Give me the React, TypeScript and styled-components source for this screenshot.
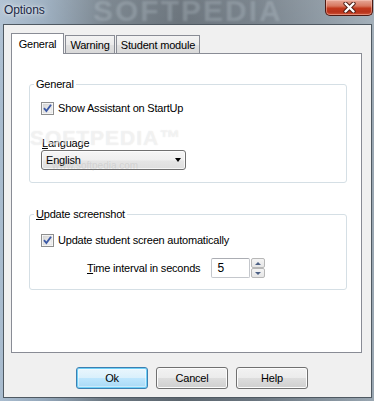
import styled, { createGlobalStyle } from 'styled-components'

const GlobalStyle = createGlobalStyle`
  html, body {
    margin: 0;
    padding: 0;
    background: #5a646d;
  }
  body {
    font-family: "Liberation Sans", Arial, sans-serif;
    font-size: 11px;
    color: #000;
  }
`

const Window = styled.div`
  position: relative;
  width: 374px;
  height: 401px;
  box-sizing: border-box;
  padding: 0 2px 3px 3px;
  display: flex;
  flex-direction: column;
  overflow: hidden;
  background:
    linear-gradient(180deg, rgba(255, 255, 255, 0.12) 0%, rgba(255, 255, 255, 0) 30%),
    linear-gradient(90deg, #a9bccf 0%, #93a7ba 12%, #6d7983 28%, #5c666f 48%, #6a757f 68%, #86939e 88%, #9aa7b2 100%);
`

const TitleBar = styled.div`
  position: relative;
  height: 24px;
  display: flex;
  align-items: flex-start;
`

const Caption = styled.span`
  position: relative;
  z-index: 1;
  margin: 3px 0 0 1px;
  font-size: 12px;
  line-height: 15px;
  letter-spacing: -0.1px;
  color: #1c2845;
  text-shadow: 0 0 6px rgba(255, 255, 255, 0.8), 0 0 3px rgba(255, 255, 255, 0.6);
`

const Watermark = styled.span`
  position: absolute;
  left: 90px;
  top: -6px;
  font-size: 30px;
  font-weight: bold;
  letter-spacing: 2px;
  color: rgba(205, 215, 225, 0.25);
  filter: blur(1.2px);
  pointer-events: none;
`

const CloseButton = styled.div`
  margin-left: auto;
  margin-right: -1px;
  width: 48px;
  height: 16px;
  box-sizing: border-box;
  border: 1px solid #4e1a12;
  border-top: none;
  border-radius: 0 0 5px 5px;
  display: flex;
  align-items: center;
  justify-content: center;
  background: linear-gradient(180deg, #e7a898 0%, #d8775f 40%, #c2391d 55%, #b8321a 80%, #d0573a 100%);
  box-shadow: inset 0 0 0 1px rgba(255, 210, 200, 0.45);
`

const Client = styled.div`
  flex: 1;
  display: flex;
  flex-direction: column;
  background: #f0f0f0;
  border: 1px solid #4f5962;
`

const TabArea = styled.div`
  padding: 8px 0 0 7px;
`

const TabStrip = styled.div`
  display: flex;
  align-items: flex-end;
  height: 21px;
`

const Tab = styled.div<{ $active?: boolean; $width: number }>`
  position: relative;
  z-index: ${(p) => (p.$active ? 2 : 1)};
  box-sizing: border-box;
  width: ${(p) => p.$width}px;
  height: ${(p) => (p.$active ? 21 : 18)}px;
  margin-bottom: ${(p) => (p.$active ? 0 : 1)}px;
  border: 1px solid #898c95;
  border-bottom: none;
  display: flex;
  align-items: center;
  justify-content: center;
  padding-top: ${(p) => (p.$active ? 0 : 1)}px;
  letter-spacing: -0.2px;
  background: ${(p) =>
    p.$active ? '#fff' : 'linear-gradient(180deg, #f3f3f3 0%, #ebebeb 50%, #e0e0e0 55%, #d9d9d9 100%)'};
  & + & {
    margin-left: 1px;
  }
`

const Panel = styled.div`
  box-sizing: border-box;
  width: 351px;
  height: 300px;
  margin-top: -1px;
  border: 1px solid #898c95;
  background: #fff;
  padding: 30px 0 0 17px;
`

const Group = styled.div<{ $height: number; $gap?: number }>`
  position: relative;
  box-sizing: border-box;
  width: 318px;
  height: ${(p) => p.$height}px;
  margin-top: ${(p) => p.$gap ?? 0}px;
  border: 1px solid #d5dfe5;
  border-radius: 3px;
  padding: ${(p) => (p.$gap ? 19 : 17)}px 0 0 11px;
`

const Legend = styled.span`
  position: absolute;
  top: -7px;
  left: 4px;
  padding: 0 2px;
  line-height: 13px;
  letter-spacing: -0.2px;
  background: #fff;
`

const CheckRow = styled.label`
  display: flex;
  align-items: center;
  gap: 4px;
  height: 13px;
  line-height: 13px;
  letter-spacing: -0.2px;
`

const Box = styled.svg`
  flex: none;
  display: block;
`

const FieldLabel = styled.div`
  margin: 22px 0 0 1px;
  line-height: 13px;
  letter-spacing: -0.2px;
`

const U = styled.span`
  text-decoration: underline;
  text-underline-offset: 1px;
`

const Select = styled.div`
  box-sizing: border-box;
  width: 145px;
  height: 20px;
  border: 1px solid #707070;
  border-radius: 3px;
  display: flex;
  align-items: center;
  padding: 0 4px 0 4px;
  letter-spacing: -0.2px;
  background: linear-gradient(180deg, #f6f6f6 0%, #efefef 50%, #e5e5e5 55%, #dedede 100%);
  box-shadow: inset 0 0 0 1px rgba(255, 255, 255, 0.7);
`

const Arrow = styled.span`
  margin-left: auto;
  width: 0;
  height: 0;
  border-left: 3.5px solid transparent;
  border-right: 3.5px solid transparent;
  border-top: 4px solid #000;
`

const TimeRow = styled.div`
  display: flex;
  align-items: center;
  height: 20px;
  margin-top: 11px;
  padding-left: 46px;
  letter-spacing: -0.2px;
`

const NumberBox = styled.div`
  box-sizing: border-box;
  width: 39px;
  height: 20px;
  margin-left: 11px;
  border: 1px solid #c4c7cc;
  border-top-color: #abadb3;
  border-radius: 2px;
  background: #fff;
  padding-left: 5px;
  display: flex;
  align-items: center;
  font-size: 12px;
`

const Spin = styled.div`
  display: flex;
  flex-direction: column;
  margin-left: 1px;
  width: 14px;
  height: 20px;
`

const SpinButton = styled.div<{ $up?: boolean }>`
  box-sizing: border-box;
  height: 10px;
  border: 1px solid #b7b7b7;
  border-radius: 2px;
  display: flex;
  align-items: center;
  justify-content: center;
  background: linear-gradient(180deg, #f4f4f4 0%, #e6e6e6 100%);
  &::after {
    content: '';
    width: 0;
    height: 0;
    border-left: 3px solid transparent;
    border-right: 3px solid transparent;
    ${(p) => (p.$up ? 'border-bottom: 3px solid #4d6185;' : 'border-top: 3px solid #4d6185;')}
  }
`

const ButtonRow = styled.div`
  display: flex;
  gap: 8px;
  margin-top: 14px;
  padding-left: 72px;
`

const Button = styled.div<{ $default?: boolean }>`
  box-sizing: border-box;
  width: 72px;
  height: 22px;
  border: 1px solid ${(p) => (p.$default ? '#3c7fb1' : '#707070')};
  border-radius: 3px;
  display: flex;
  align-items: center;
  justify-content: center;
  letter-spacing: -0.2px;
  background: ${(p) =>
    p.$default
      ? 'linear-gradient(180deg, #eaf6fd 0%, #d9f0fc 50%, #bee6fd 52%, #a7d9f5 100%)'
      : 'linear-gradient(180deg, #f2f2f2 0%, #ebebeb 50%, #dddddd 52%, #cfcfcf 100%)'};
  box-shadow: ${(p) =>
    p.$default ? 'inset 0 0 0 1px #6fd0f7, inset 0 0 0 2px rgba(255,255,255,0.4)' : 'inset 0 0 0 1px #fcfcfc'};
`

const FaintMark = styled.span`
  position: absolute;
  left: 30px;
  top: 126px;
  font-size: 21px;
  font-weight: bold;
  letter-spacing: 1px;
  color: rgba(255, 255, 255, 0.5);
  text-shadow: 0 0 1px rgba(140, 140, 140, 0.25);
  pointer-events: none;
`

const FaintUrl = styled.span`
  position: absolute;
  left: 52px;
  top: 160px;
  font-size: 10px;
  color: rgba(160, 160, 160, 0.25);
  pointer-events: none;
`

const CheckBox = () => (
  <Box width="13" height="13" viewBox="0 0 13 13">
    <defs>
      <linearGradient id="cbfill" x1="0" y1="0" x2="1" y2="1">
        <stop offset="0" stopColor="#d6d6d6" />
        <stop offset="1" stopColor="#f8f8f8" />
      </linearGradient>
    </defs>
    <rect x="0.5" y="0.5" width="12" height="12" fill="#fff" stroke="#8e8f8f" />
    <rect x="2" y="2" width="9" height="9" fill="url(#cbfill)" stroke="#cfcfcf" strokeWidth="0.5" />
    <path d="M3 6.2 L5.4 9 L10 2.8" fill="none" stroke="#3d5aa6" strokeWidth="1.9" />
  </Box>
)

const CloseGlyph = () => (
  <svg width="13" height="11" viewBox="0 0 13 11">
    <path d="M2.5 1.5 L10.5 9.5 M10.5 1.5 L2.5 9.5" stroke="#4a1a12" strokeWidth="4.2" strokeLinecap="round" />
    <path d="M2.5 1.5 L10.5 9.5 M10.5 1.5 L2.5 9.5" stroke="#fff" strokeWidth="2.4" strokeLinecap="round" />
  </svg>
)

const App = () => {
  return (
    <>
      <GlobalStyle />
      <Window>
        <TitleBar>
          <Watermark>SOFTPEDIA</Watermark>
          <Caption>Options</Caption>
          <CloseButton>
            <CloseGlyph />
          </CloseButton>
        </TitleBar>
        <Client>
          <TabArea>
            <TabStrip>
              <Tab $active $width={53}>General</Tab>
              <Tab $width={50}>Warning</Tab>
              <Tab $width={84}>Student module</Tab>
            </TabStrip>
            <Panel>
              <Group $height={99}>
                <Legend>General</Legend>
                <CheckRow>
                  <CheckBox />
                  Show Assistant on StartUp
                </CheckRow>
                <FieldLabel>
                  <U>L</U>anguage
                </FieldLabel>
                <Select>
                  English
                  <Arrow />
                </Select>
              </Group>
              <Group $height={76} $gap={31}>
                <Legend>
                  <U>U</U>pdate screenshot
                </Legend>
                <CheckRow>
                  <CheckBox />
                  Update student screen automatically
                </CheckRow>
                <TimeRow>
                  <span>
                    <U>T</U>ime interval in seconds
                  </span>
                  <NumberBox>5</NumberBox>
                  <Spin>
                    <SpinButton $up />
                    <SpinButton />
                  </Spin>
                </TimeRow>
              </Group>
            </Panel>
          </TabArea>
          <ButtonRow>
            <Button $default>Ok</Button>
            <Button>Cancel</Button>
            <Button>Help</Button>
          </ButtonRow>
        </Client>
        <FaintMark>SOFTPEDIA™</FaintMark>
        <FaintUrl>www.softpedia.com</FaintUrl>
      </Window>
    </>
  )
}

export default App
